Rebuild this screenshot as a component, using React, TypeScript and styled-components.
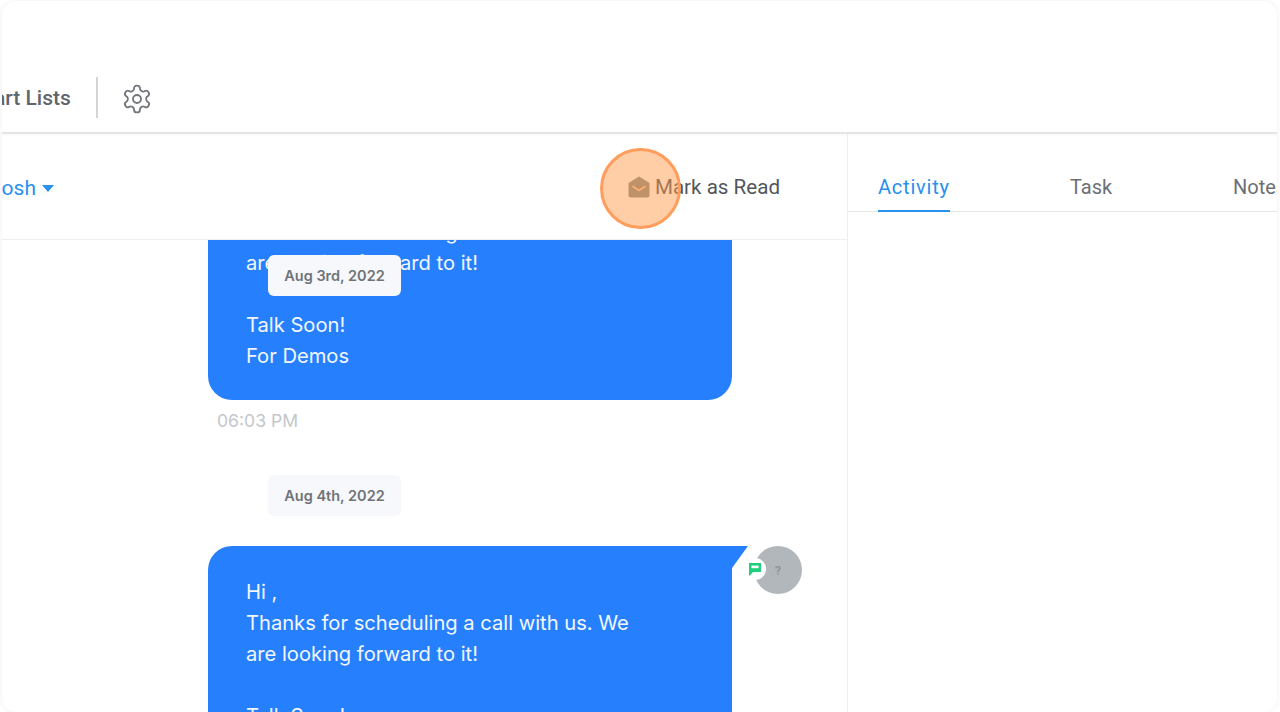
import React from 'react';
import styled, { createGlobalStyle } from 'styled-components';

const GlobalStyle = createGlobalStyle`
    html, body {
        margin: 0;
        padding: 0;
        height: 100%;
        background-color: #fff;
        overflow: hidden;
    }
    * {
        box-sizing: border-box;
    }
`;

const Page = styled.div`
    width: 1280px;
    height: 712px;
    padding: 1px 3px 0 2px;
    background-color: #fff;
`;

const Frame = styled.div`
    position: relative;
    display: flex;
    flex-direction: column;
    width: 100%;
    height: 100%;
    overflow: hidden;
    background-color: #fff;
    border-radius: 14px;
    box-shadow: 0 0 5px rgba(0, 0, 0, 0.07);
`;

const TopBar = styled.header`
    flex: 0 0 133px;
    display: flex;
    align-items: flex-end;
    gap: 25px;
    padding-bottom: 14px;
    border-bottom: 2px solid #e4e5e7;
    box-shadow: 0 1px 2px rgba(0, 0, 0, 0.04);
`;

const NavLabel = styled.span`
    margin-left: -39px;
    height: 41px;
    line-height: 43px;
    font-family: Roboto, sans-serif;
    font-size: 21px;
    font-weight: 500;
    color: #60656c;
    white-space: nowrap;
`;

const NavDivider = styled.div`
    width: 2px;
    height: 41px;
    background-color: #d3d5d8;
`;

const GearButton = styled.div`
    display: flex;
    align-items: center;
    height: 41px;
    margin-left: -2px;
    padding-top: 2px;
    color: #74787e;
`;

const Body = styled.div`
    flex: 1;
    display: flex;
    min-height: 0;
`;

const Conversation = styled.section`
    position: relative;
    flex: 0 0 846px;
    display: flex;
    flex-direction: column;
    border-right: 1px solid #eceef0;
`;

const ConversationHead = styled.div`
    flex: 0 0 106px;
    display: flex;
    align-items: center;
    justify-content: space-between;
    padding: 0 67px 0 0;
    border-bottom: 1px solid #eceef0;
`;

const ContactName = styled.div`
    display: flex;
    align-items: center;
    gap: 6px;
    margin-left: -12px;
    padding-top: 2px;
    font-family: Roboto, sans-serif;
    font-size: 21px;
    color: #2a8fee;
`;

const Caret = styled.span`
    width: 0;
    height: 0;
    margin-top: 1px;
    border-left: 6.5px solid transparent;
    border-right: 6.5px solid transparent;
    border-top: 7px solid #2a8fee;
`;

const ReadButton = styled.div`
    display: flex;
    align-items: center;
    gap: 5px;
    font-family: Roboto, sans-serif;
    font-size: 20.6px;
    color: #52565c;
`;

const Highlight = styled.div`
    position: absolute;
    left: 598px;
    top: 147px;
    width: 81px;
    height: 81px;
    border-radius: 50%;
    background-color: rgba(255, 150, 70, 0.48);
    border: 3px solid #ff9d5c;
`;

const Stream = styled.div`
    position: relative;
    flex: 1;
    min-height: 0;
    overflow: hidden;
    display: flex;
    flex-direction: column;
`;

const StickyDate = styled.div`
    position: absolute;
    left: 266px;
    top: 15px;
`;

const DateChip = styled.div`
    display: flex;
    align-items: center;
    justify-content: center;
    width: 133px;
    height: 41px;
    border-radius: 6px;
    background-color: #f6f8fb;
    font-family: Inter, sans-serif;
    font-size: 14.5px;
    font-weight: 600;
    color: #6f7378;
`;

const DateRow = styled.div`
    padding-left: 266px;
    margin-top: 43px;
`;

const MessageRow = styled.div<{ $gap?: number }>`
    position: relative;
    flex-shrink: 0;
    margin-top: ${(p) => p.$gap ?? 0}px;
    padding-left: 206px;
`;

const Bubble = styled.div<{ $tail?: boolean }>`
    position: relative;
    width: 524px;
    height: 244px;
    padding: ${(p) => (p.$tail ? '30px' : '29px')} 20px 0 38px;
    background-color: #2680fe;
    border-radius: ${(p) => (p.$tail ? '24px 0 24px 24px' : '24px')};
    font-family: Inter, sans-serif;
    font-size: 20.15px;
    line-height: 31px;
    color: #f2f7ff;

    ${(p) =>
        p.$tail &&
        `&::after {
            content: '';
            position: absolute;
            left: 100%;
            top: 0;
            width: 16px;
            height: 22px;
            background-color: #2680fe;
            clip-path: polygon(0 0, 100% 0, 0 100%);
        }`}
`;

const Line = styled.div`
    height: 31px;
    white-space: nowrap;
`;

const Time = styled.div`
    padding: 10px 0 0 215px;
    font-family: Inter, sans-serif;
    font-size: 17.6px;
    line-height: 22px;
    color: #c4c7cb;
`;

const Avatar = styled.div`
    position: absolute;
    left: 752px;
    top: 0;
    width: 48px;
    height: 48px;
    display: flex;
    align-items: center;
    justify-content: center;
    border-radius: 50%;
    background-color: #b2b7bb;
    font-family: Inter, sans-serif;
    font-size: 12px;
    font-weight: 600;
    color: #8d9296;
`;

const ChannelBadge = styled.div`
    position: absolute;
    left: 742px;
    top: 12px;
    width: 22px;
    height: 22px;
    display: flex;
    align-items: center;
    justify-content: center;
    border-radius: 50%;
    background-color: #fff;
`;

const SidePanel = styled.aside`
    flex: 1;
    min-width: 0;
    overflow: hidden;
`;

const Tabs = styled.div`
    display: flex;
    height: 78px;
    padding-left: 30px;
    border-bottom: 1px solid #e4e6e8;
    font-family: Roboto, sans-serif;
    font-size: 20px;
`;

const Tab = styled.div<{ $active?: boolean; $width: number }>`
    flex: 0 0 ${(p) => p.$width}px;
    height: 78px;
    padding-top: 40px;
    line-height: 26px;
    white-space: nowrap;
    letter-spacing: ${(p) => (p.$active ? '0.8px' : '0')};
    color: ${(p) => (p.$active ? '#2a8fee' : '#6c7076')};
`;

const TabLabel = styled.span<{ $active?: boolean }>`
    display: inline-block;
    height: 38px;
    border-bottom: ${(p) => (p.$active ? '2px solid #2a8fee' : 'none')};
`;

const GearIcon = () => (
    <svg width="32" height="32" viewBox="0 0 24 24" fill="none" stroke="currentColor" strokeWidth="1.4" strokeLinecap="round" strokeLinejoin="round">
        <path d="M12.22 2h-.44a2 2 0 0 0-2 2v.18a2 2 0 0 1-1 1.73l-.43.25a2 2 0 0 1-2 0l-.15-.08a2 2 0 0 0-2.73.73l-.22.38a2 2 0 0 0 .73 2.73l.15.1a2 2 0 0 1 1 1.72v.51a2 2 0 0 1-1 1.74l-.15.09a2 2 0 0 0-.73 2.73l.22.38a2 2 0 0 0 2.73.73l.15-.08a2 2 0 0 1 2 0l.43.25a2 2 0 0 1 1 1.73V20a2 2 0 0 0 2 2h.44a2 2 0 0 0 2-2v-.18a2 2 0 0 1 1-1.73l.43-.25a2 2 0 0 1 2 0l.15.08a2 2 0 0 0 2.73-.73l.22-.39a2 2 0 0 0-.73-2.73l-.15-.08a2 2 0 0 1-1-1.74v-.5a2 2 0 0 1 1-1.74l.15-.09a2 2 0 0 0 .73-2.73l-.22-.38a2 2 0 0 0-2.73-.73l-.15.08a2 2 0 0 1-2 0l-.43-.25a2 2 0 0 1-1-1.73V4a2 2 0 0 0-2-2z" />
        <circle cx="12" cy="12" r="3" />
    </svg>
);

const OpenMailIcon = () => (
    <svg width="22" height="22" viewBox="0 0 22 22">
        <path d="M11 0.5 21.5 7v12.5a2 2 0 0 1-2 2h-17a2 2 0 0 1-2-2V7z" fill="#868e88" />
        <path d="M5 10.5 11 14.5 17 10.5" fill="none" stroke="#fdc898" strokeWidth="1.6" strokeLinecap="round" strokeLinejoin="round" />
    </svg>
);

const ChatIcon = () => (
    <svg width="14" height="14" viewBox="0 0 14 14">
        <path d="M1 1h12v9H5l-3 3.4H1z" fill="#1fcf7b" />
        <rect x="3.4" y="3.6" width="7.2" height="2.6" fill="#fff" />
    </svg>
);

const messageLines = ['Hi ,', 'Thanks for scheduling a call with us. We', 'are looking forward to it!', '', 'Talk Soon!', 'For Demos'];

const Message = ({ tail }: { tail?: boolean }) => (
    <Bubble $tail={tail}>
        {messageLines.map((line, i) => (
            <Line key={i}>{line}</Line>
        ))}
    </Bubble>
);

export default function App(): JSX.Element {
    return (
        <Page>
            <GlobalStyle />
            <Frame>
                <TopBar>
                    <NavLabel>Smart Lists</NavLabel>
                    <NavDivider />
                    <GearButton>
                        <GearIcon />
                    </GearButton>
                </TopBar>
                <Body>
                    <Conversation>
                        <ConversationHead>
                            <ContactName>
                                Josh <Caret />
                            </ContactName>
                            <ReadButton>
                                <OpenMailIcon />
                                Mark as Read
                            </ReadButton>
                        </ConversationHead>
                        <Stream>
                            <MessageRow $gap={-84}>
                                <Message />
                            </MessageRow>
                            <Time>06:03 PM</Time>
                            <DateRow>
                                <DateChip>Aug 4th, 2022</DateChip>
                            </DateRow>
                            <MessageRow $gap={30}>
                                <Message tail />
                                <Avatar>?</Avatar>
                                <ChannelBadge>
                                    <ChatIcon />
                                </ChannelBadge>
                            </MessageRow>
                            <StickyDate>
                                <DateChip>Aug 3rd, 2022</DateChip>
                            </StickyDate>
                        </Stream>
                    </Conversation>
                    <SidePanel>
                        <Tabs>
                            <Tab $active $width={192}>
                                <TabLabel $active>Activity</TabLabel>
                            </Tab>
                            <Tab $width={163}>
                                <TabLabel>Task</TabLabel>
                            </Tab>
                            <Tab $width={80}>
                                <TabLabel>Notes</TabLabel>
                            </Tab>
                        </Tabs>
                    </SidePanel>
                </Body>
                <Highlight />
            </Frame>
        </Page>
    );
}
